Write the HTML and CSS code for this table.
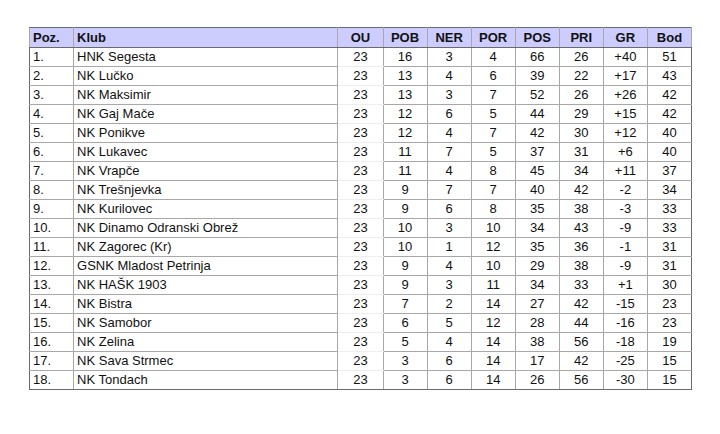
FILE: index.html
```html
<!DOCTYPE html>
<html lang="hr">
<head>
<meta charset="utf-8">
<title>Tablica</title>
<link rel="stylesheet" href="styles.css">
</head>
<body>
<div class="page">
<table class="standings">
<colgroup>
<col class="c-poz"><col class="c-klub"><col class="c-ou"><col class="c-n"><col class="c-n"><col class="c-n"><col class="c-n"><col class="c-n"><col class="c-n"><col class="c-n">
</colgroup>
<thead>
<tr><th class="l">Poz.</th><th class="l">Klub</th><th class="ou">OU</th><th>POB</th><th>NER</th><th>POR</th><th>POS</th><th>PRI</th><th>GR</th><th>Bod</th></tr>
</thead>
<tbody>
<tr><td class="l">1.</td><td class="l">HNK Segesta</td><td class="ou">23</td><td>16</td><td>3</td><td>4</td><td>66</td><td>26</td><td>+40</td><td>51</td></tr>
<tr><td class="l">2.</td><td class="l">NK Lučko</td><td class="ou">23</td><td>13</td><td>4</td><td>6</td><td>39</td><td>22</td><td>+17</td><td>43</td></tr>
<tr><td class="l">3.</td><td class="l">NK Maksimir</td><td class="ou">23</td><td>13</td><td>3</td><td>7</td><td>52</td><td>26</td><td>+26</td><td>42</td></tr>
<tr><td class="l">4.</td><td class="l">NK Gaj Mače</td><td class="ou">23</td><td>12</td><td>6</td><td>5</td><td>44</td><td>29</td><td>+15</td><td>42</td></tr>
<tr><td class="l">5.</td><td class="l">NK Ponikve</td><td class="ou">23</td><td>12</td><td>4</td><td>7</td><td>42</td><td>30</td><td>+12</td><td>40</td></tr>
<tr><td class="l">6.</td><td class="l">NK Lukavec</td><td class="ou">23</td><td>11</td><td>7</td><td>5</td><td>37</td><td>31</td><td>+6</td><td>40</td></tr>
<tr><td class="l">7.</td><td class="l">NK Vrapče</td><td class="ou">23</td><td>11</td><td>4</td><td>8</td><td>45</td><td>34</td><td>+11</td><td>37</td></tr>
<tr><td class="l">8.</td><td class="l">NK Trešnjevka</td><td class="ou">23</td><td>9</td><td>7</td><td>7</td><td>40</td><td>42</td><td>-2</td><td>34</td></tr>
<tr><td class="l">9.</td><td class="l">NK Kurilovec</td><td class="ou">23</td><td>9</td><td>6</td><td>8</td><td>35</td><td>38</td><td>-3</td><td>33</td></tr>
<tr><td class="l">10.</td><td class="l">NK Dinamo Odranski Obrež</td><td class="ou">23</td><td>10</td><td>3</td><td>10</td><td>34</td><td>43</td><td>-9</td><td>33</td></tr>
<tr><td class="l">11.</td><td class="l">NK Zagorec (Kr)</td><td class="ou">23</td><td>10</td><td>1</td><td>12</td><td>35</td><td>36</td><td>-1</td><td>31</td></tr>
<tr><td class="l">12.</td><td class="l">GSNK Mladost Petrinja</td><td class="ou">23</td><td>9</td><td>4</td><td>10</td><td>29</td><td>38</td><td>-9</td><td>31</td></tr>
<tr><td class="l">13.</td><td class="l">NK HAŠK 1903</td><td class="ou">23</td><td>9</td><td>3</td><td>11</td><td>34</td><td>33</td><td>+1</td><td>30</td></tr>
<tr><td class="l">14.</td><td class="l">NK Bistra</td><td class="ou">23</td><td>7</td><td>2</td><td>14</td><td>27</td><td>42</td><td>-15</td><td>23</td></tr>
<tr><td class="l">15.</td><td class="l">NK Samobor</td><td class="ou">23</td><td>6</td><td>5</td><td>12</td><td>28</td><td>44</td><td>-16</td><td>23</td></tr>
<tr><td class="l">16.</td><td class="l">NK Zelina</td><td class="ou">23</td><td>5</td><td>4</td><td>14</td><td>38</td><td>56</td><td>-18</td><td>19</td></tr>
<tr><td class="l">17.</td><td class="l">NK Sava Strmec</td><td class="ou">23</td><td>3</td><td>6</td><td>14</td><td>17</td><td>42</td><td>-25</td><td>15</td></tr>
<tr><td class="l">18.</td><td class="l">NK Tondach</td><td class="ou">23</td><td>3</td><td>6</td><td>14</td><td>26</td><td>56</td><td>-30</td><td>15</td></tr>
</tbody>
</table>
</div>
</body>
</html>
```
FILE: styles.css
```css
html, body {
  margin: 0;
  padding: 0;
  background: #ffffff;
}
.page {
  padding: 27px 0 0 29px;
}
.standings {
  border-collapse: collapse;
  table-layout: fixed;
  width: 663px;
  font-family: "Liberation Sans", Arial, sans-serif;
  font-size: 13px;
  color: #111111;
  border: 1px solid #6a6a6a;
}
.c-poz { width: 44px; }
.c-klub { width: 264px; }
.c-ou { width: 45px; }
.c-n { width: 44px; }
.standings th,
.standings td {
  height: 18px;
  padding: 0;
  line-height: 18px;
  text-align: center;
  white-space: nowrap;
  border: 1px solid #a8a8a8;
}
.standings th {
  height: 19px;
  line-height: 19px;
  background: #ccccff;
  font-weight: bold;
  border-top: 1px solid #6a6a6a;
  border-bottom: 1px solid #6a6a6a;
}
.standings .l {
  text-align: left;
  padding-left: 3px;
}
.standings td.ou {
  border-left-color: #f2f2f2;
  border-top-color: #eeeeee;
  border-bottom-color: #eeeeee;
}
.standings th.ou {
  border-left-color: #ccccff;
}
.standings td:first-child { border-left: 1px solid #6a6a6a; }
.standings td:last-child { border-right: 1px solid #6a6a6a; }
.standings tbody tr:last-child td { border-bottom: 1px solid #6a6a6a; }
```
